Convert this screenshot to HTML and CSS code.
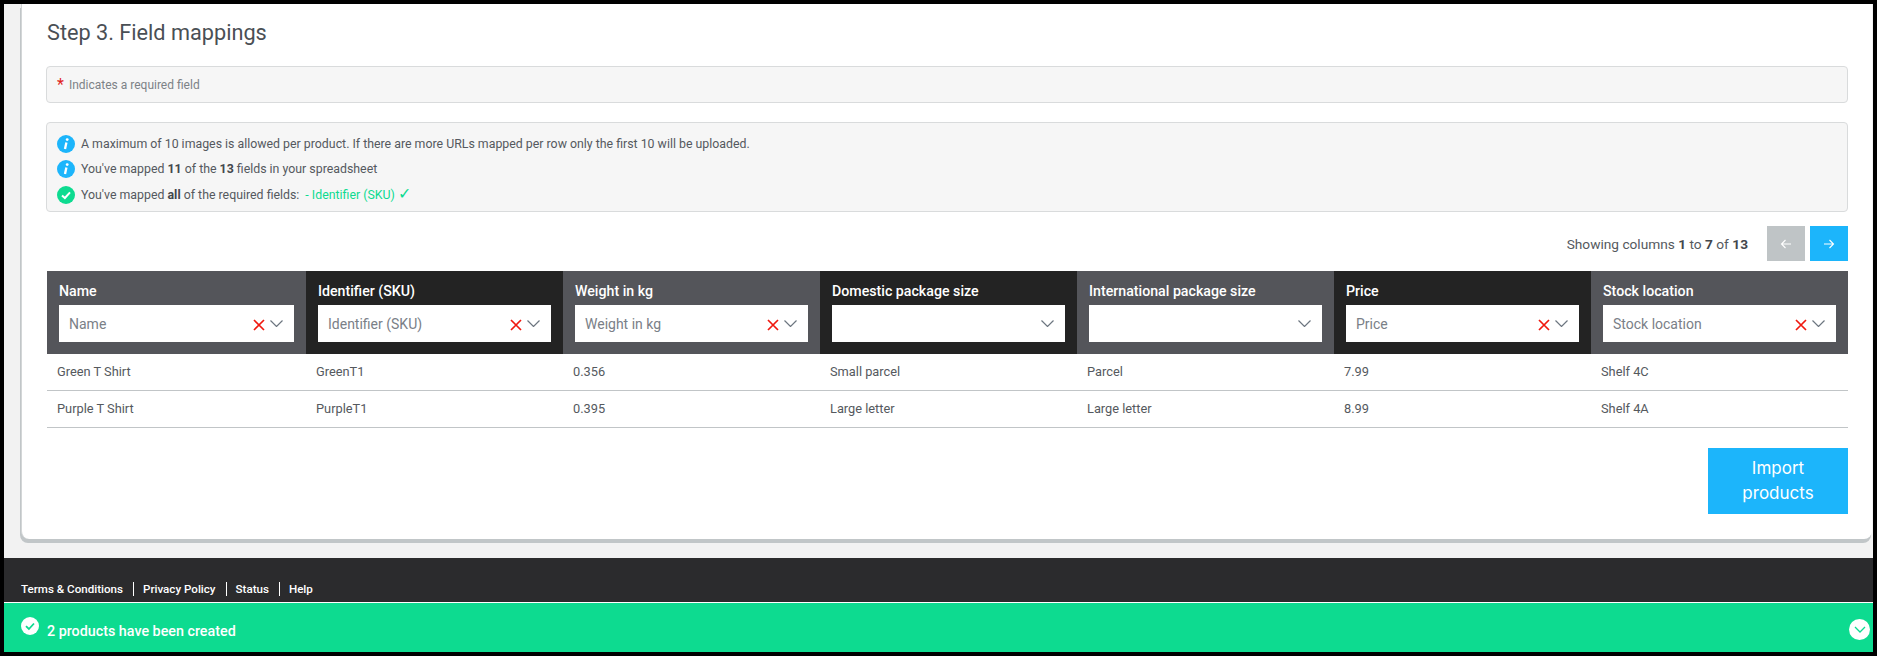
FILE: index.html
```html
<!DOCTYPE html>
<html lang="en">
<head>
<meta charset="utf-8">
<title>Field mappings</title>
<link rel="stylesheet" href="styles.css">
</head>
<body>
<div class="frame">
  <main class="page">
    <section class="card">
      <h2 class="title">Step 3. Field mappings</h2>
      <div class="note note-required"><span class="star">*</span> Indicates a required field</div>
      <div class="note note-info">
        <div class="info-row">
          <svg class="ico" viewBox="0 0 18 18"><circle cx="9" cy="9" r="9" fill="#1cb5fb"/><circle cx="10.2" cy="4.6" r="1.4" fill="#fff"/><path d="M9.4 7.4 8 14" stroke="#fff" stroke-width="2.3" fill="none"/></svg>
          <span>A maximum of 10 images is allowed per product. If there are more URLs mapped per row only the first 10 will be uploaded.</span>
        </div>
        <div class="info-row">
          <svg class="ico" viewBox="0 0 18 18"><circle cx="9" cy="9" r="9" fill="#1cb5fb"/><circle cx="10.2" cy="4.6" r="1.4" fill="#fff"/><path d="M9.4 7.4 8 14" stroke="#fff" stroke-width="2.3" fill="none"/></svg>
          <span>You've mapped <b>11</b> of the <b>13</b> fields in your spreadsheet</span>
        </div>
        <div class="info-row">
          <svg class="ico" viewBox="0 0 18 18"><circle cx="9" cy="9" r="9" fill="#0ddb90"/><path d="M5 9.400 7.900 12 13 6.400" stroke="#fff" stroke-width="2" fill="none"/></svg>
          <span>You've mapped <b>all</b> of the required fields:</span>
          <span class="ok">- Identifier (SKU) <span class="tick">✓</span></span>
        </div>
      </div>

      <div class="pager">
        <span class="pager-text">Showing columns <b>1</b> to <b>7</b> of <b>13</b></span>
        <button class="page-btn page-btn-off" type="button"><svg viewBox="0 0 12 12"><path d="M11 6H1.500M5.500 2 1.500 6l4 4" stroke="#fff" stroke-width="1.100" fill="none"/></svg></button>
        <button class="page-btn" type="button"><svg viewBox="0 0 12 12"><path d="M1 6h9.500M6.500 2l4 4-4 4" stroke="#fff" stroke-width="1.100" fill="none"/></svg></button>
      </div>

      <table class="map">
        <colgroup>
          <col class="c1"><col class="c2"><col class="c3"><col class="c4"><col class="c5"><col class="c6"><col class="c7">
        </colgroup>
        <thead>
          <tr>
            <th class="h-light"><div class="h-label">Name</div><div class="sel"><span class="sel-val">Name</span><svg class="x" viewBox="0 0 12 12"><path d="M1 1l10 10M11 1 1 11" stroke="#f0190f" stroke-width="1.700"/></svg><svg class="chev" viewBox="0 0 13 7"><path d="M.5.5l6 6 6-6" stroke="#6d7680" stroke-width="1.200" fill="none"/></svg></div></th>
            <th class="h-dark"><div class="h-label">Identifier (SKU)</div><div class="sel"><span class="sel-val">Identifier (SKU)</span><svg class="x" viewBox="0 0 12 12"><path d="M1 1l10 10M11 1 1 11" stroke="#f0190f" stroke-width="1.700"/></svg><svg class="chev" viewBox="0 0 13 7"><path d="M.5.5l6 6 6-6" stroke="#6d7680" stroke-width="1.200" fill="none"/></svg></div></th>
            <th class="h-light"><div class="h-label">Weight in kg</div><div class="sel"><span class="sel-val">Weight in kg</span><svg class="x" viewBox="0 0 12 12"><path d="M1 1l10 10M11 1 1 11" stroke="#f0190f" stroke-width="1.700"/></svg><svg class="chev" viewBox="0 0 13 7"><path d="M.5.5l6 6 6-6" stroke="#6d7680" stroke-width="1.200" fill="none"/></svg></div></th>
            <th class="h-dark"><div class="h-label">Domestic package size</div><div class="sel"><span class="sel-val"></span><svg class="chev" viewBox="0 0 13 7"><path d="M.5.5l6 6 6-6" stroke="#6d7680" stroke-width="1.200" fill="none"/></svg></div></th>
            <th class="h-light"><div class="h-label">International package size</div><div class="sel"><span class="sel-val"></span><svg class="chev" viewBox="0 0 13 7"><path d="M.5.5l6 6 6-6" stroke="#6d7680" stroke-width="1.200" fill="none"/></svg></div></th>
            <th class="h-dark"><div class="h-label">Price</div><div class="sel"><span class="sel-val">Price</span><svg class="x" viewBox="0 0 12 12"><path d="M1 1l10 10M11 1 1 11" stroke="#f0190f" stroke-width="1.700"/></svg><svg class="chev" viewBox="0 0 13 7"><path d="M.5.5l6 6 6-6" stroke="#6d7680" stroke-width="1.200" fill="none"/></svg></div></th>
            <th class="h-light"><div class="h-label">Stock location</div><div class="sel"><span class="sel-val">Stock location</span><svg class="x" viewBox="0 0 12 12"><path d="M1 1l10 10M11 1 1 11" stroke="#f0190f" stroke-width="1.700"/></svg><svg class="chev" viewBox="0 0 13 7"><path d="M.5.5l6 6 6-6" stroke="#6d7680" stroke-width="1.200" fill="none"/></svg></div></th>
          </tr>
        </thead>
        <tbody>
          <tr><td>Green T Shirt</td><td>GreenT1</td><td>0.356</td><td>Small parcel</td><td>Parcel</td><td>7.99</td><td>Shelf 4C</td></tr>
          <tr><td>Purple T Shirt</td><td>PurpleT1</td><td>0.395</td><td>Large letter</td><td>Large letter</td><td>8.99</td><td>Shelf 4A</td></tr>
        </tbody>
      </table>

      <div class="actions">
        <button class="import" type="button">Import products</button>
      </div>
    </section>
  </main>

  <footer class="footer">
    <a class="foot-link">Terms &amp; Conditions</a>
    <a class="foot-link">Privacy Policy</a>
    <a class="foot-link">Status</a>
    <a class="foot-link">Help</a>
  </footer>

  <div class="toast">
    <svg class="toast-ico" viewBox="0 0 18 18"><circle cx="9" cy="9" r="9" fill="#fff"/><path d="M5 9.200 7.900 12 13 6.500" stroke="#0ddb90" stroke-width="1.800" fill="none"/></svg>
    <span class="toast-text">2 products have been created</span>
    <span class="toast-close"><svg viewBox="0 0 12 7"><path d="M1 1l5 5 5-5" stroke="#0ddb90" stroke-width="1.300" fill="none"/></svg></span>
  </div>
</div>
</body>
</html>
```
FILE: styles.css
```css
* { box-sizing: border-box; }
html, body { margin: 0; padding: 0; }
body { font-family: Roboto, "Liberation Sans", sans-serif; color: #4f5358; }

.frame {
  width: 1877px;
  height: 656px;
  border: 4px solid #000;
  background: #f2f2f2;
  display: flex;
  flex-direction: column;
  overflow: hidden;
}

.page { flex: 1; padding: 0 0 0 17px; }

.card {
  height: 535px;
  background: #fff;
  border-left: 1px solid #d3d6d7;
  border-radius: 0 0 8px 8px;
  box-shadow: -1px 4px 0 #c1c6c8;
  padding: 14px 24px 0 25px;
  margin-right: 1px;
}

.title {
  margin: 0 0 18px;
  font-size: 21.7px;
  line-height: 30px;
  font-weight: 400;
  color: #4a4f55;
}

.note {
  background: #f6f6f6;
  border: 1px solid #d9dbdc;
  border-radius: 4px;
  margin-left: -1px;
}

.note-required {
  height: 37px;
  padding: 1px 10px 0;
  display: flex;
  align-items: center;
  gap: 5px;
  font-size: 12px;
  color: #7d8287;
  margin-bottom: 19px;
}

.star { color: #e0231b; font-size: 16px; line-height: 12px; }

.note-info { height: 90px; padding: 8px 10px 3px; }

.info-row {
  height: 25.5px;
  display: flex;
  align-items: center;
  gap: 6px;
  font-size: 12.35px;
  color: #55595e;
}

.info-row b { font-weight: 700; color: #43474c; }
.ok { color: #0ddb90; }
.tick { font-size: 16px; line-height: 12px; }
.ico { width: 18px; height: 18px; flex: none; }

.pager {
  margin-top: 14px;
  height: 35px;
  display: flex;
  align-items: center;
  justify-content: flex-end;
}

.pager-text { font-size: 13.7px; color: #55595e; margin-right: 19px; padding-top: 1px; }
.pager-text b { color: #43474c; }

.page-btn {
  width: 38px;
  height: 35px;
  margin: 0 0 0 5px;
  padding: 0;
  border: 0;
  background: #1cb5fb;
  display: flex;
  align-items: center;
  justify-content: center;
}

.page-btn svg { width: 12px; height: 12px; }
.page-btn-off { background: #bfc4c6; margin-left: 0; }

.map {
  margin-top: 10px;
  width: 1801px;
  border-collapse: collapse;
  table-layout: fixed;
}

.c1 { width: 259px; }
.c2, .c3, .c4, .c5, .c6, .c7 { width: 257px; }

.map th {
  height: 83px;
  padding: 10px 12px 12px;
  text-align: left;
  vertical-align: top;
  font-weight: 500;
  color: #fff;
}

.h-light { background: #54555a; }
.h-dark { background: #232323; }

.h-label { font-size: 14.2px; line-height: 20px; margin-bottom: 4px; }

.sel {
  height: 37px;
  background: #fff;
  display: flex;
  align-items: center;
  padding: 0 11px 0 10px;
  font-size: 14px;
  font-weight: 400;
  color: #7a8087;
}

.sel-val { flex: 1; }
.x { width: 12px; height: 12px; margin: 2px 5px 0 0; }
.chev { width: 13px; height: 7px; margin-top: -1px; }

.map td {
  height: 36px;
  padding: 0 10px;
  font-size: 12.8px;
  color: #55595e;
  border-bottom: 1px solid #c1c5c7;
}

.map tbody tr:last-child td { height: 37px; }

.actions { display: flex; justify-content: flex-end; margin-top: 20px; }

.import {
  width: 140px;
  height: 66px;
  border: 0;
  padding: 0 20px;
  background: #1cb5fb;
  color: #fff;
  font-family: Inter, sans-serif;
  font-size: 17px;
  line-height: 25px;
  font-weight: 400;
}

.footer {
  height: 44px;
  background: #2b2b2d;
  display: flex;
  align-items: center;
  padding: 18px 0 0 17px;
  flex: none;
}

.foot-link {
  font-size: 11.6px;
  font-weight: 500;
  color: #fff;
  line-height: 14px;
  padding-right: 10px;
  margin-right: 9px;
  border-right: 1px solid #fff;
}

.foot-link:last-child { border-right: 0; }

.toast {
  height: 50px;
  flex: none;
  background: #0ddb90;
  border-top: 1px solid #fff;
  display: flex;
  align-items: center;
  padding: 0 3px 0 17px;
  color: #fff;
}

.toast-ico { width: 18px; height: 18px; margin-top: -3px; }
.toast-text { flex: 1; margin-left: 8px; font-size: 14.3px; font-weight: 500; padding-top: 6px; }

.toast-close {
  width: 21px;
  height: 21px;
  border-radius: 50%;
  background: #fff;
  display: flex;
  align-items: center;
  justify-content: center;
  margin-top: 4px;
}

.toast-close svg { width: 12px; height: 7px; }
```
